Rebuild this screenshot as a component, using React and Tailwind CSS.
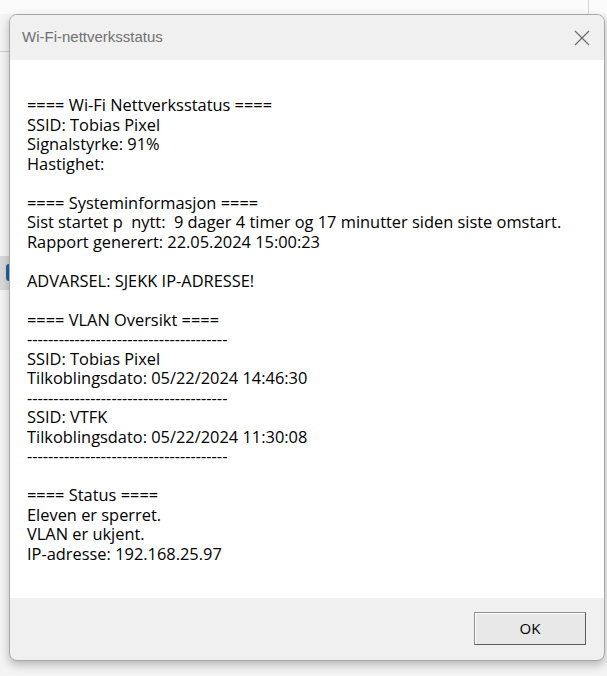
import React from "react";

const dashes = "-".repeat(38);

const lines = [
  "==== Wi-Fi Nettverksstatus ====",
  "SSID: Tobias Pixel",
  "Signalstyrke: 91%",
  "Hastighet: ",
  "",
  "==== Systeminformasjon ====",
  "Sist startet p  nytt:  9 dager 4 timer og 17 minutter siden siste omstart.",
  "Rapport generert: 22.05.2024 15:00:23",
  "",
  "ADVARSEL: SJEKK IP-ADRESSE!",
  "",
  "==== VLAN Oversikt ====",
  dashes,
  "SSID: Tobias Pixel",
  "Tilkoblingsdato: 05/22/2024 14:46:30",
  dashes,
  "SSID: VTFK",
  "Tilkoblingsdato: 05/22/2024 11:30:08",
  dashes,
  "",
  "==== Status ====",
  "Eleven er sperret.",
  "VLAN er ukjent.",
  "IP-adresse: 192.168.25.97",
];

export default function App() {
  return (
    <div
      className="relative w-[607px] h-[676px] overflow-hidden bg-[#f4f4f4]"
      style={{ fontFamily: '"Liberation Sans", Arial, sans-serif' }}
    >
      {/* desktop bits behind the dialog */}
      <div className="absolute left-0 top-0 w-full h-[14px] bg-[#fbfbfb]" />
      <div className="absolute left-[588px] top-0 w-px h-[20px] bg-[#d6d6d6]" />
      <div className="absolute left-0 top-[51px] w-[10px] h-px bg-[#cfcfcf]" />
      <div className="absolute left-0 top-[256px] w-[9px] h-[34px] bg-[#d8d8d8]" />
      <div className="absolute left-[6px] top-[264px] w-[3px] h-[17px] rounded-l bg-[#1c5fb8]" />

      {/* dialog */}
      <div className="relative ml-[9px] mt-[14px] w-[596px] h-[647px] flex flex-col rounded-lg border border-[#a8a8a8] bg-[#f0f0f0] overflow-hidden shadow-[0_4px_10px_rgba(0,0,0,0.25)]">
        <div className="h-[45px] shrink-0 flex items-center justify-between pl-[12px] pr-[14px] bg-[#f0f0f0]">
          <span className="text-[15px] text-[#707070]">Wi-Fi-nettverksstatus</span>
          <svg width="16" height="16" viewBox="0 0 16 16" className="text-[#6b6b6b]">
            <path d="M1 1 L15 15 M15 1 L1 15" stroke="currentColor" strokeWidth="1.2" fill="none" />
          </svg>
        </div>

        <div
          className="h-[538px] shrink-0 bg-white pt-[35px] pl-[17px] text-[16.4px] leading-[19.52px] text-black"
          style={{ fontFamily: '"Open Sans", "Noto Sans", sans-serif' }}
        >
          {lines.map((l, i) => (
            <div key={i} className="whitespace-pre h-[19.52px]">
              {l}
            </div>
          ))}
        </div>

        <div className="flex-1 flex justify-end items-start pt-[14px] pr-[18px]">
          <button
            className="w-[112px] h-[33px] bg-[#e8e8e8] border border-[#8f8f8f] border-b-[#5e5e5e] border-r-[#5e5e5e] shadow-[inset_1px_1px_0_#ffffff] text-[15px] text-black"
            style={{ fontFamily: '"Open Sans", sans-serif' }}
          >
            OK
          </button>
        </div>
      </div>
    </div>
  );
}
